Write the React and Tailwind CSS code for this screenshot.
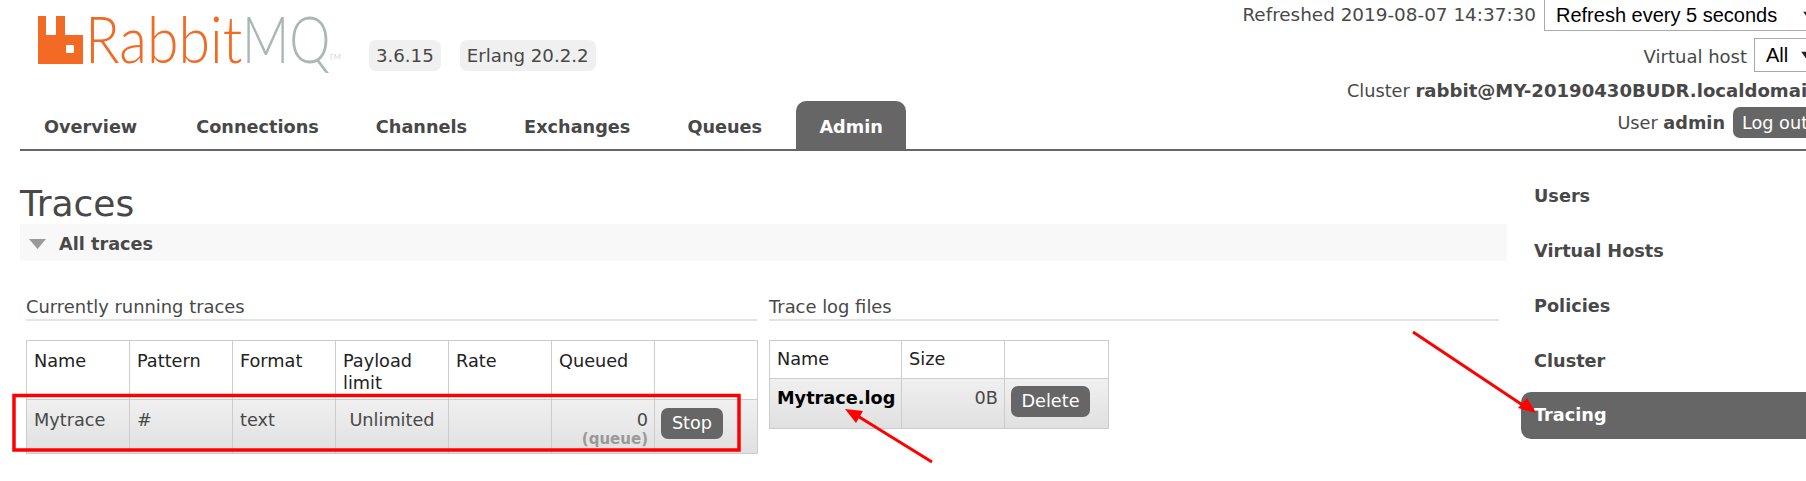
const tabs = ["Overview", "Connections", "Channels", "Exchanges", "Queues"];
const sideLinks = ["Users", "Virtual Hosts", "Policies", "Cluster"];
const traceHeads = ["Name", "Pattern", "Format", "Payload limit", "Rate", "Queued", ""];

const Logo = () => (
  <div className="flex items-start h-[64px] pt-[16px] pl-[18px]">
    <svg width="45" height="48" viewBox="0 0 45 48" className="shrink-0">
      <path
        fillRule="evenodd"
        fill="#f26a24"
        d="M0 0H8V19H18V0H27V19H45V48H0ZM28 29V36Q28 37 29 37H35Q36 37 36 36V30Q36 29 35 29Z"
      />
    </svg>
    {/* wordmark */}
    <div className="ml-[2px] h-[48px] pb-[2px] flex items-end font-['Lato'] font-light text-[65px] leading-[48px] whitespace-nowrap">
      <span className="inline-block w-[157px] origin-left scale-x-[.88] text-[#f26a24]">Rabbit</span>
      <span className="inline-block w-[84px] origin-left scale-x-[.8] text-[#a9b8b1]">MQ</span>
      <span className="ml-[3px] text-[8px] leading-[10px] text-[#b8c4bf]">TM</span>
    </div>
  </div>
);

const Badge = ({ children }) => (
  <span className="h-[31px] px-[7px] flex items-center rounded-[7px] bg-[#f0f0f0] text-[18.2px] text-[#484848] whitespace-nowrap">
    {children}
  </span>
);

const Button = ({ children, className }) => (
  <span className={`h-[31px] flex items-center justify-center rounded-[7px] bg-[#666666] text-white text-[17.7px] ${className}`}>
    {children}
  </span>
);

const SelectBox = ({ label, className, caret }) => (
  <span className={`relative flex items-center border border-[#a9a9a9] font-['Liberation_Sans'] text-[20px] text-black whitespace-nowrap ${className}`}>
    {label}
    <svg width="10" height="7" viewBox="0 0 10 7" className={`absolute top-1/2 -translate-y-1/2 ${caret}`}>
      <path d="M0 0H10L5 7Z" fill="#222222" />
    </svg>
  </span>
);

const Annotations = () => (
  <svg className="absolute inset-0 pointer-events-none" width="1806" height="481" viewBox="0 0 1806 481">
    <rect x="14" y="395.5" width="725" height="54.5" fill="none" stroke="#ff0000" strokeWidth="3.5" />
    <path d="M1413 332L1524 406" stroke="#ff0000" strokeWidth="3" fill="none" />
    <path d="M1536 413L1518 408L1527 398Z" fill="#ff0000" />
    <path d="M932 462L856 415" stroke="#ff0000" strokeWidth="3" fill="none" />
    <path d="M845 409L856 423L863 411Z" fill="#ff0000" />
  </svg>
);

const App = () => {
  return (
    <div className="relative w-[1806px] h-[481px] overflow-hidden bg-white font-['DejaVu_Sans'] text-[#484848] text-[17.7px]">
      {/* Header */}
      <header className="ml-[20px] h-[151px] border-b-2 border-[#666666] flex justify-between">
        <div className="flex flex-col justify-between">
          <div className="flex">
            <Logo />
            <div className="flex gap-[19px] mt-[40px] ml-[28px]">
              <Badge>3.6.15</Badge>
              <Badge>Erlang 20.2.2</Badge>
            </div>
          </div>
          <nav className="flex pl-[24px] h-[48px] font-bold">
            {tabs.map((t) => (
              <a key={t} className="mr-[57px] first:mr-[59px] pt-[4px] flex items-center">{t}</a>
            ))}
            <a className="-ml-[23px] w-[110px] pt-[4px] flex items-center justify-center rounded-t-[10px] bg-[#666666] text-white">Admin</a>
          </nav>
        </div>

        <div className="-mr-[38px] flex flex-col items-end shrink-0">
          <div className="flex items-center -mt-[2px] h-[33px]">
            <span className="mr-[8px] text-[18.4px]">Refreshed 2019-08-07 14:37:30</span>
            <SelectBox label="Refresh every 5 seconds" className="w-[300px] h-[33px] pl-[11px]" caret="left-[258px]" />
          </div>
          <div className="flex items-center mt-[7px] h-[34px]">
            <span className="mr-[7px] pt-[2px] text-[18px]">Virtual host</span>
            <SelectBox label="All" className="w-[90px] h-[34px] pl-[11px]" caret="left-[46px]" />
          </div>
          <div className="mt-[7px] h-[24px] leading-[24px] pr-[24px] whitespace-nowrap">
            Cluster <b className="text-[18.1px]">rabbit@MY-20190430BUDR.localdomain</b>
          </div>
          <div className="flex items-center mt-[4px] pr-[31px]">
            <span className="mr-[8px] pt-[2px]">User <b>admin</b></span>
            <Button className="w-[80px] pt-[2px] pl-[4px]">Log out</Button>
          </div>
        </div>
      </header>

      <div className="flex">
        {/* Main */}
        <main className="ml-[20px] w-[1487px] shrink-0">
          <h1 className="mt-[30px] h-[43px] leading-[45px] text-[36px] font-normal">Traces</h1>
          <div className="h-[37px] pt-[3px] flex items-center bg-[#f8f8f8] pl-[9px] font-bold">
            <svg width="17" height="10" viewBox="0 0 17 10" className="mr-[13px]">
              <path d="M0 0H17L8.5 10Z" fill="#999999" />
            </svg>
            All traces
          </div>

          <div className="flex gap-[12px] ml-[6px] mt-[30px]">
            <section className="w-[731px]">
              <h3 className="h-[30px] leading-[32px] border-b-2 border-[#e4e4e4] text-[17.9px] font-normal">Currently running traces</h3>
              <table className="mt-[19px] table-fixed border-collapse w-[731px]">
                <colgroup>
                  <col className="w-[103px]" />
                  <col className="w-[103px]" />
                  <col className="w-[103px]" />
                  <col className="w-[113px]" />
                  <col className="w-[103px]" />
                  <col className="w-[103px]" />
                  <col className="w-[103px]" />
                </colgroup>
                <thead>
                  <tr className="h-[59px]">
                    {traceHeads.map((h) => (
                      <th key={h} className="border border-[#cccccc] align-top text-left font-normal px-[7px] pt-[9px] leading-[22px] text-[#222222]">{h}</th>
                    ))}
                  </tr>
                </thead>
                <tbody>
                  <tr className="h-[54px] bg-linear-to-b from-[#f0f0f0] to-[#e0e0e0]">
                    <td className="border border-[#cccccc] align-top px-[7px] pt-[9px] leading-[22px]">Mytrace</td>
                    <td className="border border-[#cccccc] align-top px-[7px] pt-[9px] leading-[22px]">#</td>
                    <td className="border border-[#cccccc] align-top px-[7px] pt-[9px] leading-[22px]">text</td>
                    <td className="border border-[#cccccc] align-top text-center pt-[9px] leading-[22px]">Unlimited</td>
                    <td className="border border-[#cccccc]"></td>
                    <td className="border border-[#cccccc] align-top text-right px-[6px] pt-[9px] leading-[22px]">
                      0
                      <div className="text-[15px] font-bold text-[#999999] leading-[16px]">(queue)</div>
                    </td>
                    <td className="border border-[#cccccc] align-top pl-[6px] pt-[8px]">
                      <Button className="w-[62px]">Stop</Button>
                    </td>
                  </tr>
                </tbody>
              </table>
            </section>

            <section className="w-[730px]">
              <h3 className="h-[30px] leading-[32px] border-b-2 border-[#e4e4e4] text-[17.9px] font-normal">Trace log files</h3>
              <table className="mt-[19px] table-fixed border-collapse w-[339px]">
                <colgroup>
                  <col className="w-[132px]" />
                  <col className="w-[103px]" />
                  <col className="w-[104px]" />
                </colgroup>
                <thead>
                  <tr className="h-[38px]">
                    <th className="border border-[#cccccc] text-left font-normal px-[7px] text-[#222222]">Name</th>
                    <th className="border border-[#cccccc] text-left font-normal px-[7px] text-[#222222]">Size</th>
                    <th className="border border-[#cccccc]"></th>
                  </tr>
                </thead>
                <tbody>
                  <tr className="h-[50px] bg-linear-to-b from-[#f0f0f0] to-[#e0e0e0]">
                    <td className="border border-[#cccccc] align-top px-[7px] pt-[8px] leading-[22px] font-bold text-black">Mytrace.log</td>
                    <td className="border border-[#cccccc] align-top text-right px-[6px] pt-[8px] leading-[22px]">0B</td>
                    <td className="border border-[#cccccc] align-top pl-[6px] pt-[7px]">
                      <Button className="w-[79px]">Delete</Button>
                    </td>
                  </tr>
                </tbody>
              </table>
            </section>
          </div>
        </main>

        {/* Side nav */}
        <aside className="ml-[14px] mt-[21px] w-[320px] shrink-0 flex flex-col gap-[8px] font-bold">
          {sideLinks.map((l) => (
            <a key={l} className="h-[47px] pl-[13px] pt-[2px] flex items-center">{l}</a>
          ))}
          <a className="h-[47px] pl-[13px] flex items-center rounded-l-[10px] bg-[#666666] text-white">Tracing</a>
        </aside>
      </div>

      <Annotations />
    </div>
  );
};

export default App;
